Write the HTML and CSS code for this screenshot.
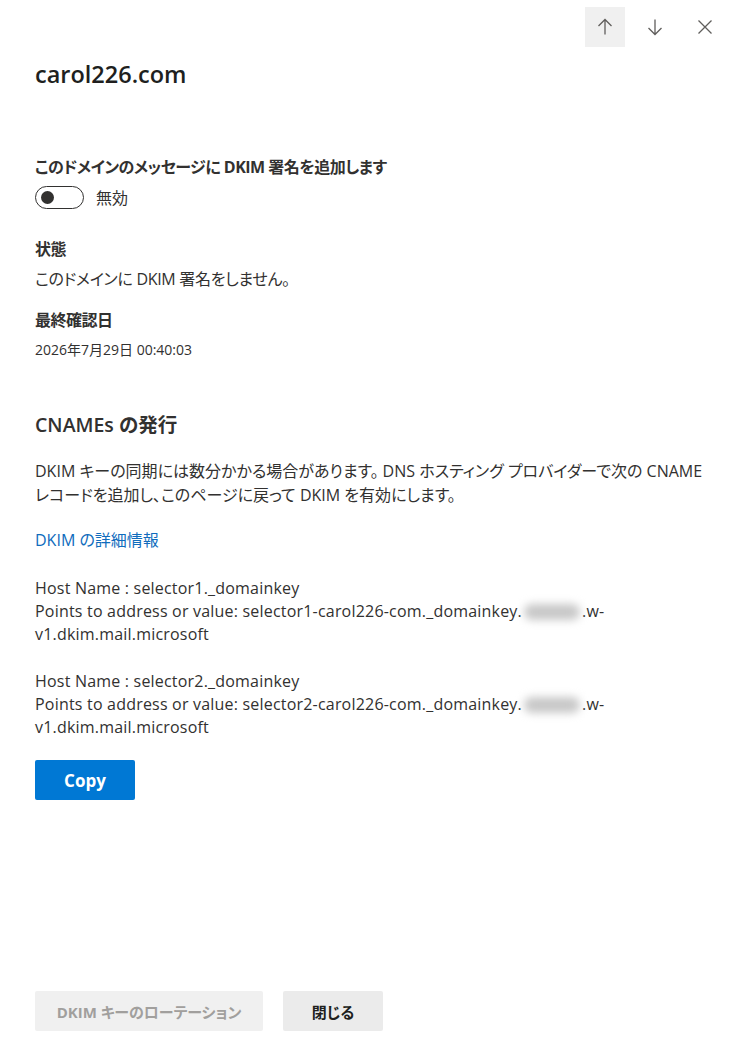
FILE: index.html
```html
<!DOCTYPE html>
<html lang="ja">
<head>
<meta charset="utf-8">
<link rel="stylesheet" href="styles.css">
</head>
<body>
<div class="panel">
  <div class="topbar">
    <button class="icon-btn active" aria-label="up">
      <svg width="20" height="20" viewBox="0 0 20 20"><path d="M10 2.5v15M3.5 9 10 2.5 16.5 9" fill="none" stroke="#605e5c" stroke-width="1.3"/></svg>
    </button>
    <button class="icon-btn" aria-label="down">
      <svg width="20" height="20" viewBox="0 0 20 20"><path d="M10 2.5v15M3.5 11 10 17.5 16.5 11" fill="none" stroke="#605e5c" stroke-width="1.3"/></svg>
    </button>
    <button class="icon-btn" aria-label="close">
      <svg width="20" height="20" viewBox="0 0 20 20"><path d="M3.5 3.5l13 13M16.5 3.5l-13 13" fill="none" stroke="#605e5c" stroke-width="1.3"/></svg>
    </button>
  </div>

  <div class="content">
    <h1 class="title">carol226.com</h1>

    <div class="field-label toggle-label">このドメインのメッセージに DKIM 署名を追加します</div>
    <div class="toggle-row">
      <span class="toggle"><span class="knob"></span></span>
      <span class="toggle-text">無効</span>
    </div>

    <div class="field-label status-label">状態</div>
    <div class="text">このドメインに DKIM 署名をしません。</div>

    <div class="field-label date-label">最終確認日</div>
    <div class="small">2026年7月29日 00:40:03</div>

    <h2 class="section">CNAMEs の発行</h2>
    <p class="para">DKIM キーの同期には数分かかる場合があります。 DNS ホスティング プロバイダーで次の CNAME レコードを追加し、このページに戻って DKIM を有効にします。</p>

    <a class="link" href="#">DKIM の詳細情報</a>

    <p class="record">Host Name : selector1._domainkey<br>Points to address or value: selector1-carol226-com._domainkey.<span class="blur" aria-hidden="true"></span>.w-<br>v1.dkim.mail.microsoft</p>
    <p class="record">Host Name : selector2._domainkey<br>Points to address or value: selector2-carol226-com._domainkey.<span class="blur" aria-hidden="true"></span>.w-<br>v1.dkim.mail.microsoft</p>

    <button class="primary">Copy</button>
  </div>

  <div class="footer">
    <button class="btn disabled">DKIM キーのローテーション</button>
    <button class="btn">閉じる</button>
  </div>
</div>
</body>
</html>
```
FILE: styles.css
```css
* { box-sizing: border-box; }
html, body { margin: 0; padding: 0; background: #fff; }
body {
  font-family: "Open Sans", "Noto Sans CJK JP", sans-serif;
  font-feature-settings: "palt";
  color: #323130;
  font-size: 16px;
}
.panel {
  height: 1045px;
  display: flex;
  flex-direction: column;
}
.topbar {
  display: flex;
  justify-content: flex-end;
  gap: 10px;
  padding: 7px 7px 0 0;
}
.icon-btn {
  width: 40px;
  height: 40px;
  border: none;
  background: transparent;
  display: flex;
  align-items: center;
  justify-content: center;
  padding: 0;
}
.icon-btn.active { background: #f0f0f0; }
.content {
  padding: 0 20px 0 35px;
  display: flex;
  flex-direction: column;
  align-items: flex-start;
}
.title {
  margin: 11px 0 0;
  font-size: 23.5px;
  font-weight: 600;
  line-height: 32px;
  color: #201f1e;
}
.field-label {
  font-weight: 700;
  font-size: 16px;
  line-height: 22px;
  letter-spacing: -0.5px;
}
.toggle-label { margin-top: 66px; }
.toggle-row {
  display: flex;
  align-items: center;
  gap: 12px;
  margin-top: 8px;
}
.toggle {
  width: 49px;
  height: 23px;
  border: 1.5px solid #323130;
  border-radius: 12px;
  display: flex;
  align-items: center;
  padding-left: 5px;
}
.knob {
  width: 13px;
  height: 13px;
  border-radius: 50%;
  background: #323130;
}
.toggle-text { line-height: 22px; }
.status-label { margin-top: 29px; }
.text { margin-top: 8px; line-height: 22px; letter-spacing: -0.3px; }
.date-label { margin-top: 19px; }
.small { margin-top: 9px; font-size: 14px; line-height: 20px; }
.section {
  margin: 52px 0 0;
  font-size: 19.5px;
  font-weight: 600;
  line-height: 26px;
}
.para {
  margin: 21px 0 0;
  line-height: 24px;
}
.link {
  margin-top: 22px;
  color: #0f6cbd;
  text-decoration: none;
  line-height: 22px;
}
.record {
  margin: 26px 0 0;
  line-height: 23px;
  letter-spacing: 0.2px;
}
.record + .record { margin-top: 24px; }
.blur {
  display: inline-block;
  width: 56px;
  height: 16px;
  vertical-align: -3px;
  margin: 0 2px;
  background: #c8c8c8;
  border-radius: 8px;
  filter: blur(4px);
}
.primary {
  margin-top: 21px;
  width: 100px;
  height: 40px;
  border: none;
  border-radius: 2px;
  background: #0078d4;
  color: #fff;
  font-family: inherit;
  font-size: 17px;
  font-weight: 700;
}
.footer {
  margin-top: auto;
  display: flex;
  gap: 20px;
  padding: 0 35px 14px;
}
.btn {
  height: 40px;
  border: none;
  border-radius: 2px;
  background: #ebebeb;
  color: #201f1e;
  font-family: inherit;
  font-feature-settings: "palt";
  font-size: 15px;
  font-weight: 700;
  padding: 0;
  width: 100px;
  white-space: nowrap;
}
.btn.disabled {
  background: #f0f0f0;
  color: #a19f9d;
  width: 228px;
}
```
